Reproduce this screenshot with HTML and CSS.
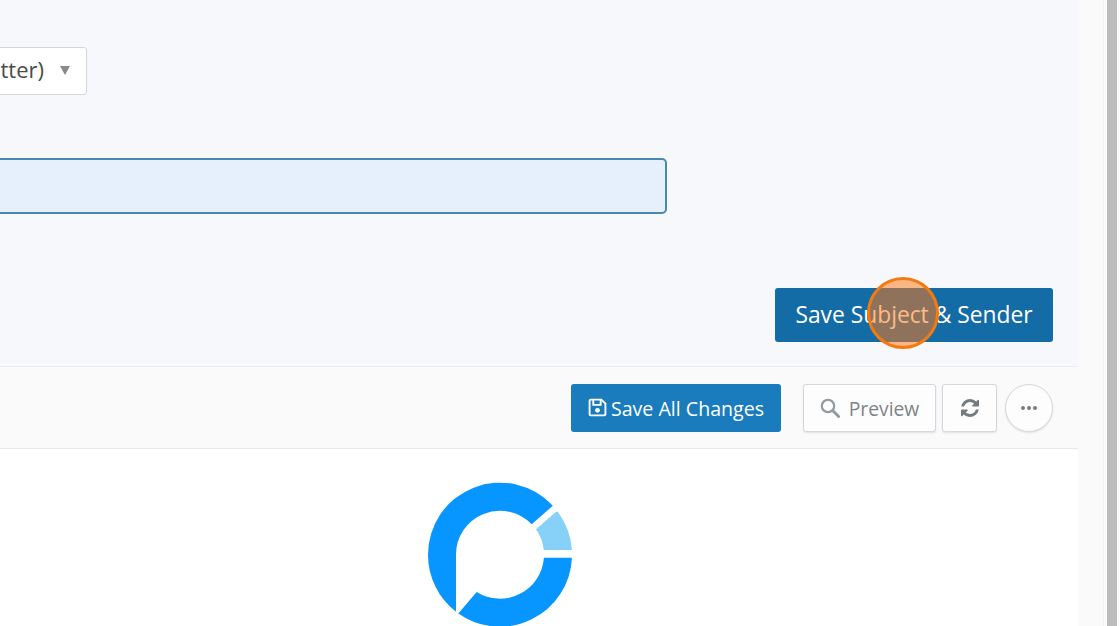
FILE: index.html
```html
<!DOCTYPE html>
<html lang="en">
<head>
<meta charset="utf-8">
<title>Email editor</title>
<link rel="stylesheet" href="styles.css">
</head>
<body>
<div class="page">
  <main class="main">
    <section class="settings">
      <div class="select">
        <span class="select-text">Default (Newsletter)</span>
        <span class="caret"></span>
      </div>
      <div class="input"></div>
      <div class="save-row">
        <button class="btn-save-subject">Save Subject &amp; Sender</button>
      </div>
    </section>
    <section class="toolbar">
      <button class="btn-primary">
        <svg class="icon-save" viewBox="0 0 18 18" aria-hidden="true">
          <path d="M2.5 1.5h10.2l3.8 3.8v10.2a1 1 0 0 1-1 1h-13a1 1 0 0 1-1-1v-13a1 1 0 0 1 1-1z" fill="none" stroke="currentColor" stroke-width="1.8"/>
          <path d="M5 2v4.5h7V2" fill="none" stroke="currentColor" stroke-width="1.8"/>
          <circle cx="9" cy="11.7" r="2.3" fill="currentColor"/>
        </svg>
        <span class="btn-label">Save All Changes</span>
      </button>
      <button class="btn-default btn-preview">
        <svg class="icon-search" viewBox="0 0 20 20" aria-hidden="true">
          <circle cx="8" cy="8" r="6.2" fill="none" stroke="currentColor" stroke-width="2.2"/>
          <path d="M12.6 12.6l6 6" fill="none" stroke="currentColor" stroke-width="2.8" stroke-linecap="round"/>
        </svg>
        <span class="btn-label">Preview</span>
      </button>
      <button class="btn-default btn-refresh">
        <svg class="icon-refresh" viewBox="128 128 1536 1536" aria-hidden="true">
          <path fill="currentColor" d="M1639 1056q0 5-1 7-64 268-268 434.5t-478 166.5q-146 0-282.5-55t-243.5-157l-129 129q-19 19-45 19t-45-19-19-45v-448q0-26 19-45t45-19h448q26 0 45 19t19 45-19 45l-137 137q71 66 161 102t187 36q134 0 250-65t186-179q11-17 53-117 8-23 30-23h192q13 0 22.5 9.5t9.5 22.5zm25-800v448q0 26-19 45t-45 19h-448q-26 0-45-19t-19-45 19-45l138-138q-148-137-349-137-134 0-250 65t-186 179q-11 17-53 117-8 23-30 23h-199q-13 0-22.5-9.5t-9.5-22.5v-7q65-268 270-434.5t480-166.5q146 0 284 55.5t245 156.5l130-129q19-19 45-19t45 19 19 45z"/>
        </svg>
      </button>
      <button class="btn-more" aria-label="More">
        <span class="dot"></span><span class="dot"></span><span class="dot"></span>
      </button>
    </section>
    <section class="canvas">
      <svg class="logo" viewBox="0 0 480 450" aria-hidden="true">
        <path class="logo-main" d="M398.5 89.26A216 216 0 0 0 24 236A216 216 0 0 0 108 406.97L108 236A132 132 0 0 1 335 144.4Z"/>
        <path class="logo-main" d="M115 412.2A216 216 0 0 0 455.8 245L371.7 245A132 132 0 0 1 170 347.9Z"/>
        <path class="logo-light" d="M405 110Q410 105 415 109.4A216 216 0 0 1 455.8 222L371.2 222A132 132 0 0 0 348 160Z"/>
      </svg>
    </section>
  </main>
  <div class="gutter"></div>
  <div class="scrollbar"></div>
  <div class="edge"></div>
</div>
<div class="click-marker"></div>
</body>
</html>
```
FILE: styles.css
```css
* {
  box-sizing: border-box;
}

html,
body {
  margin: 0;
  height: 100%;
  overflow: hidden;
}

body {
  font-family: "Open Sans", "Liberation Sans", sans-serif;
  background: #fafafa;
}

.page {
  display: flex;
  height: 626px;
}

.main {
  width: 1078px;
  flex: none;
  display: flex;
  flex-direction: column;
  overflow: hidden;
}

.settings {
  height: 367px;
  flex: none;
  padding-top: 47px;
  background: #f6f8fc;
  border-bottom: 1px solid #ededf0;
}

.select {
  width: 387px;
  height: 48px;
  margin-left: -300px;
  padding-right: 16px;
  display: flex;
  align-items: center;
  justify-content: flex-end;
  gap: 16px;
  background: #fff;
  border: 1px solid #d3d6da;
  border-radius: 3px;
  font-size: 22px;
  color: #4a4a4a;
  white-space: nowrap;
}

.select-text {
  margin-bottom: 5px;
}

.caret {
  width: 0;
  height: 0;
  margin-bottom: 2px;
  border-left: 5px solid transparent;
  border-right: 5px solid transparent;
  border-top: 9px solid #8a8a8a;
}

.input {
  width: 967px;
  height: 56px;
  margin-top: 63px;
  margin-left: -300px;
  background: #e6f0fd;
  border: 2px solid #4a89ae;
  border-radius: 5px;
}

.save-row {
  display: flex;
  justify-content: flex-end;
  margin-top: 74px;
  padding-right: 25px;
}

.btn-save-subject {
  width: 278px;
  height: 54px;
  padding: 0 0 2px;
  border: 0;
  border-radius: 3px;
  background: #146ca6;
  color: #fff;
  font-family: inherit;
  font-size: 22.8px;
}

.toolbar {
  height: 82px;
  flex: none;
  display: flex;
  align-items: center;
  justify-content: flex-end;
  padding-right: 25px;
  background: #fafafa;
  border-bottom: 1px solid #e8e8e8;
}

.btn-primary,
.btn-default,
.btn-more {
  height: 48px;
  padding: 0;
  display: flex;
  align-items: center;
  justify-content: center;
  font-family: inherit;
  font-size: 19.6px;
}

.btn-label {
  padding-top: 1px;
}

.btn-primary {
  width: 210px;
  margin-right: 22px;
  gap: 4px;
  border: 0;
  border-radius: 3px;
  background: #1a7bbd;
  color: #fff;
}

.icon-save {
  width: 19px;
  height: 19px;
}

.btn-default {
  background: #fdfdfd;
  border: 1px solid #d5d8dc;
  border-radius: 3px;
  box-shadow: 0 1px 2px rgba(0, 0, 0, 0.1);
  color: #7d8489;
}

.btn-preview {
  width: 133px;
  gap: 9px;
  margin-right: 6px;
  font-size: 19.3px;
}

.icon-search {
  width: 20px;
  height: 20px;
  color: #93999d;
}

.btn-refresh {
  width: 55px;
  margin-right: 8px;
  color: #757c81;
}

.icon-refresh {
  width: 18px;
  height: 18px;
}

.btn-more {
  width: 48px;
  gap: 2px;
  background: #fdfdfd;
  border: 1px solid #d5d8dc;
  border-radius: 50%;
  box-shadow: 0 1px 2px rgba(0, 0, 0, 0.1);
}

.dot {
  width: 4px;
  height: 4px;
  border-radius: 50%;
  background: #757c81;
}

.canvas {
  flex: 1;
  display: flex;
  justify-content: center;
  padding-top: 27px;
  padding-right: 78px;
  background: #fff;
}

.logo {
  width: 160px;
  height: 150px;
  flex: none;
}

.logo-main {
  fill: #0796ff;
}

.logo-light {
  fill: #87d1f9;
}

.gutter {
  width: 26px;
  flex: none;
  background: #fafafa;
  border-right: 1px solid #f3f3f3;
}

.scrollbar {
  width: 10px;
  margin-left: 3px;
  flex: none;
  background: #bcbcbc;
}

.edge {
  flex: 1;
  background: #fbfbfb;
}

.click-marker {
  position: absolute;
  left: 867px;
  top: 277px;
  width: 72px;
  height: 72px;
  border: 3px solid #f47a10;
  border-radius: 50%;
  background: rgba(255, 120, 24, 0.52);
}
```
